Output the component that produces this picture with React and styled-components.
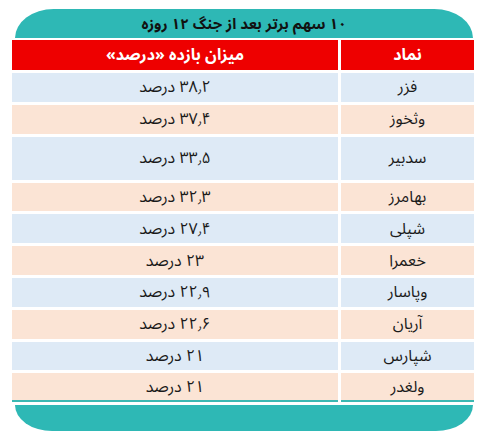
import React from 'react';
import styled, { createGlobalStyle } from 'styled-components';

const GlobalStyle = createGlobalStyle`
  body {
    margin: 0;
    background: #ffffff;
    font-family: "Noto Sans Arabic", "DejaVu Sans", sans-serif;
  }
`;

const Card = styled.div`
  width: 479px;
  padding-top: 9px;
  direction: rtl;
`;

const TitleBar = styled.div`
  margin: 0 6px 0 15px;
  height: 29px;
  background: #2eb8b5;
  border-radius: 40px 40px 0 0 / 30px 30px 0 0;
  display: flex;
  align-items: center;
  justify-content: center;
  font-size: 15px;
  font-weight: bold;
  color: #111;
`;

const Table = styled.div`
  margin: 2px 5px 0 12px;
  display: grid;
  grid-template-columns: 133px 326px;
  grid-template-rows: 30px repeat(2, 28.8px) 43px repeat(7, 28.8px);
  gap: 3px;
`;

const HeadCell = styled.div`
  background: #ee0000;
  color: #fff;
  font-weight: bold;
  font-size: 16px;
  display: flex;
  align-items: center;
  justify-content: center;
`;

const Cell = styled.div`
  background: ${p => (p.$odd ? '#fbe4d5' : '#deeaf6')};
  color: #1a1a1a;
  font-size: 16px;
  display: flex;
  align-items: center;
  justify-content: center;
  box-sizing: border-box;
  border-bottom: ${p => (p.$last ? '2px solid #3bb8b2' : 'none')};
`;

const Footer = styled.div`
  margin: 3px 6px 0 15px;
  height: 26px;
  background: #2eb8b5;
  border-radius: 0 0 40px 40px / 0 0 28px 28px;
`;

const rows = [
  ['فزر', '۳۸٫۲ درصد'],
  ['وثخوز', '۳۷٫۴ درصد'],
  ['سدبیر', '۳۳٫۵ درصد'],
  ['بهامرز', '۳۲٫۳ درصد'],
  ['شپلی', '۲۷٫۴ درصد'],
  ['خعمرا', '۲۳ درصد'],
  ['وپاسار', '۲۲٫۹ درصد'],
  ['آریان', '۲۲٫۶ درصد'],
  ['شپارس', '۲۱ درصد'],
  ['ولغدر', '۲۱ درصد'],
];

export default function App() {
  return (
    <>
      <GlobalStyle />
      <Card>
        <TitleBar>۱۰ سهم برتر بعد از جنگ ۱۲ روزه</TitleBar>
        <Table>
          <HeadCell>نماد</HeadCell>
          <HeadCell>میزان بازده «درصد»</HeadCell>
          {rows.map(([sym, val], i) => (
            <React.Fragment key={sym}>
              <Cell $odd={i % 2 === 1} $last={i === rows.length - 1}>{sym}</Cell>
              <Cell $odd={i % 2 === 1} $last={i === rows.length - 1}>{val}</Cell>
            </React.Fragment>
          ))}
        </Table>
        <Footer />
      </Card>
    </>
  );
}
